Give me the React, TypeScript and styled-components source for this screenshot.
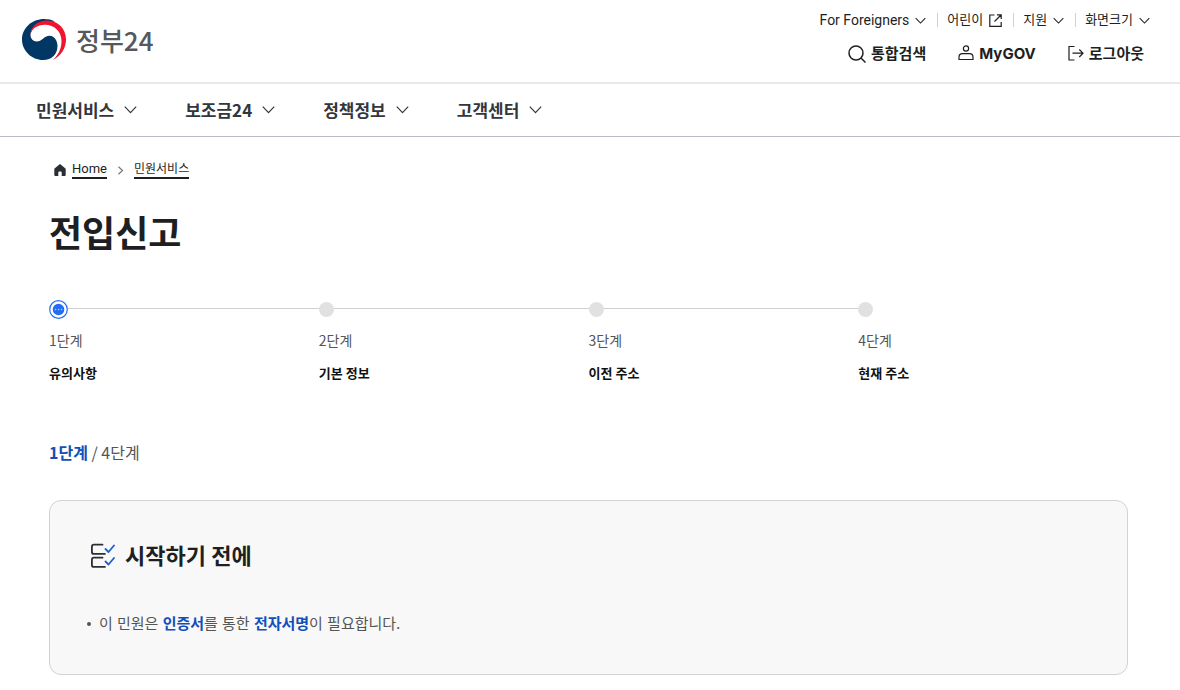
import React from "react";
import styled, { createGlobalStyle } from "styled-components";

const GlobalStyle = createGlobalStyle`
  *, *::before, *::after { box-sizing: border-box; }
  body {
    margin: 0;
    background: #fff;
    color: #1d1f22;
    font-family: Inter, "Noto Sans CJK KR", sans-serif;
    font-size: 14px;
  }
  h1, h2, p, ol, ul { margin: 0; padding: 0; }
  ol, ul { list-style: none; }
  svg { display: block; flex: none; }
`;

const Header = styled.header`
  display: flex;
  justify-content: space-between;
  align-items: flex-start;
  padding: 8px 30px 8px 22px;
  height: 84px;
  border-bottom: 2px solid #e6e8ea;
`;

const Brand = styled.a`
  display: flex;
  align-items: center;
  gap: 9px;
  height: 64px;
  color: #55585c;
  font-family: "Noto Sans CJK KR", sans-serif;
  font-size: 26px;
  font-weight: 500;
  line-height: 40px;
  text-decoration: none;
`;

const Tools = styled.div`
  display: flex;
  flex-direction: column;
  align-items: flex-end;
  gap: 8px;
`;

const UtilityList = styled.ul`
  display: flex;
  align-items: center;
`;

const UtilityItem = styled.li`
  display: flex;
  align-items: center;

  & + &::before {
    content: "";
    width: 1px;
    height: 14px;
    margin: 0 9px 0 11px;
    background: #cdd1d5;
  }
`;

const PlainButton = styled.button`
  display: flex;
  align-items: center;
  padding: 0;
  border: 0;
  background: none;
  color: inherit;
  font: inherit;
  cursor: pointer;
`;

const UtilityButton = styled(PlainButton)<{ $latin?: boolean }>`
  gap: 6px;
  font-family: Roboto, "Noto Sans CJK KR", sans-serif;
  font-size: ${(p) => (p.$latin ? 14 : 13)}px;
  line-height: 24px;
`;

const ActionList = styled.ul`
  display: flex;
  gap: 32px;
  padding-right: 6px;
`;

const ActionButton = styled(PlainButton)`
  gap: 5px;
  font-size: 15px;
  font-weight: 700;
  line-height: 28px;
`;

const MainNav = styled.nav`
  border-bottom: 1px solid #b8bdc4;
  padding: 0 36px 2px;
`;

const MenuList = styled.ul`
  display: flex;
  gap: 48px;
`;

const MenuButton = styled(PlainButton)`
  gap: 10px;
  height: 50px;
  color: #33363d;
  font-family: "Noto Sans CJK KR", sans-serif;
  font-size: 17px;
  font-weight: 700;
`;

const Main = styled.main`
  padding: 24px 52px 16px 49px;
`;

const Breadcrumb = styled.ol`
  display: flex;
  align-items: center;
  gap: 9px;
  padding-left: 5px;
`;

const Crumb = styled.li`
  display: flex;
  align-items: center;
  gap: 6px;
`;

const CrumbLink = styled.a<{ $latin?: boolean }>`
  border-bottom: 2px solid #1d1f22;
  color: inherit;
  font-family: Roboto, "Noto Sans CJK KR", sans-serif;
  font-size: ${(p) => (p.$latin ? 13 : 12)}px;
  line-height: 16px;
  text-decoration: none;
`;

const PageTitle = styled.h1`
  margin-top: 27px;
  font-size: 36px;
  font-weight: 700;
  line-height: 56px;
`;

const Steps = styled.ol`
  display: grid;
  grid-template-columns: repeat(4, 1fr);
  margin-top: 38px;
`;

const Step = styled.li`
  display: flex;
  flex-direction: column;
`;

const StepTrack = styled.div`
  display: flex;
  align-items: center;
  height: 19px;
`;

const StepDot = styled.span`
  width: 15px;
  height: 15px;
  border-radius: 50%;
  background: #e1e1e1;
`;

const StepLine = styled.span`
  flex: 1;
  height: 1px;
  margin-bottom: 2px;
  background: #d0d0d0;
`;

const StepNumber = styled.span`
  margin-top: 9px;
  color: #555;
  font-family: "Noto Sans CJK KR", sans-serif;
  font-size: 14px;
  line-height: 24px;
`;

const StepName = styled.strong`
  margin-top: 9px;
  color: #111;
  font-size: 13px;
  line-height: 24px;
`;

const Progress = styled.p`
  margin-top: 55px;
  color: #555;
  font-family: "Noto Sans CJK KR", sans-serif;
  font-size: 16px;
  line-height: 24px;
`;

const Accent = styled.strong`
  color: #124fb8;
`;

const Card = styled.section`
  margin-top: 36px;
  padding: 37px 40px 36px;
  border: 1px solid #d2d2d2;
  border-radius: 12px;
  background: #f8f8f8;
`;

const CardTitle = styled.h2`
  display: flex;
  align-items: center;
  gap: 10px;
  font-size: 22px;
  font-weight: 700;
  line-height: 36px;
`;

const NoteList = styled.ul`
  margin-top: 36px;
`;

const Note = styled.li`
  display: flex;
  align-items: center;
  gap: 8px;
  color: #555;
  font-size: 15px;
  line-height: 28px;

  &::before {
    content: "";
    width: 4px;
    height: 4px;
    margin-left: -3px;
    border-radius: 50%;
    background: #555;
  }
`;

const Chevron = ({ size }: { size: number }) => (
  <svg width={size} height={size} viewBox="0 0 13 13" fill="none" stroke="currentColor" strokeWidth="1.2" aria-hidden="true">
    <path d="M.8 3.6 6.5 9.6l5.7-6" />
  </svg>
);

const Emblem = () => (
  <svg width="45" height="44" viewBox="0 0 45 44" aria-hidden="true">
    <path fill="#003764" d="M33 3.500C30 1.800 26 1 22 1 10 1 0 10 0 21.500S10 42 21 42c9 0 14.500-6 14.500-14 0-6-3.500-10.300-8-10.300-5.500 0-7.500 5.800-13 5.800-3.500 0-6-3-6-6.500C8.500 10 15 4.500 24 4.500Z" />
    <path fill="#f0142f" d="M8.500 17C8.500 9 15 2.600 25 2.600c11 0 19 8.400 19 18.900 0 8.500-5 16.500-13 20.500 6-6 8.500-12 8.500-19 0-10-7.500-16-16.500-16.200C15 6.800 9.500 11 8.500 17Z" />
  </svg>
);

const ExternalIcon = () => (
  <svg width="13" height="13" viewBox="0 0 13 13" fill="none" stroke="currentColor" strokeWidth="1.2" aria-hidden="true">
    <path d="M5.500 1H.8v11.300h11.400V8M8 .8h4.200V5M12 1 5.500 7.500" />
  </svg>
);

const SearchIcon = () => (
  <svg width="18" height="18" viewBox="0 0 18 18" fill="none" stroke="currentColor" strokeWidth="1.500" aria-hidden="true">
    <circle cx="8" cy="8" r="7" />
    <path d="m13 13 4.500 4.500" />
  </svg>
);

const PersonIcon = () => (
  <svg width="16" height="18" viewBox="0 0 16 18" fill="none" stroke="currentColor" strokeWidth="1.200" aria-hidden="true">
    <circle cx="8" cy="3.500" r="2.600" />
    <path d="M1 14.500V12.200C1 10.200 2.500 8.700 4.500 8.700h7c2 0 3.500 1.500 3.500 3.500v2.300Z" />
  </svg>
);

const LogoutIcon = () => (
  <svg width="16" height="18" viewBox="0 0 16 18" fill="none" stroke="currentColor" strokeWidth="1.200" aria-hidden="true">
    <path d="M6.500 1.500H1V15h5.500M4.500 8.200H15M11.300 4.500 15 8.200l-3.700 3.800" />
  </svg>
);

const HomeIcon = () => (
  <svg width="12" height="12" viewBox="0 0 12 12" fill="#2b2e33" aria-hidden="true">
    <path d="M6 0 .8 4.300Q.3 4.800.3 5.500V11q0 1 1 1h3V8.500q0-1 1-1h1.400q1 0 1 1V12h3q1 0 1-1V5.500q0-.7-.5-1.200Z" />
  </svg>
);

const CrumbArrow = () => (
  <svg width="9" height="9" viewBox="0 0 9 9" fill="none" stroke="#6d7882" strokeWidth="1.200" aria-hidden="true">
    <path d="m2.500.8 4 3.700-4 3.700" />
  </svg>
);

const ActiveDot = () => (
  <svg width="19" height="19" viewBox="0 0 19 19" aria-hidden="true">
    <circle cx="9.500" cy="9.500" r="8.800" fill="#fff" stroke="#256ef4" strokeWidth="1.200" />
    <circle cx="9.500" cy="9.500" r="5.800" fill="#256ef4" />
    <g fill="#a9c6fb">
      <circle cx="6.500" cy="9.500" r=".8" />
      <circle cx="9.500" cy="9.500" r=".8" />
      <circle cx="12.500" cy="9.500" r=".8" />
    </g>
  </svg>
);

const ChecklistIcon = () => (
  <svg width="25" height="26" viewBox="0 0 25 26" fill="none" strokeWidth="1.800" strokeLinecap="round" strokeLinejoin="round" aria-hidden="true">
    <path stroke="#2b2e33" d="M12.500 1.700H3.900q-2 0-2 2v5.200q0 2 2 2h11M12.500 14.700H3.900q-2 0-2 2v5.200q0 2 2 2h11" />
    <path stroke="#1f5fd0" d="m15.500 6 3 3 5.500-6.500M15.500 18.500l3 3 5.500-6.500" />
  </svg>
);

const menus = ["민원서비스", "보조금24", "정책정보", "고객센터"];
const steps = ["유의사항", "기본 정보", "이전 주소", "현재 주소"];

export default function App() {
  return (
    <>
      <GlobalStyle />
      <Header>
        <Brand href="#"><Emblem />정부24</Brand>
        <Tools>
          <UtilityList>
            <UtilityItem><UtilityButton $latin>For Foreigners<Chevron size={11} /></UtilityButton></UtilityItem>
            <UtilityItem><UtilityButton>어린이<ExternalIcon /></UtilityButton></UtilityItem>
            <UtilityItem><UtilityButton>지원<Chevron size={11} /></UtilityButton></UtilityItem>
            <UtilityItem><UtilityButton>화면크기<Chevron size={11} /></UtilityButton></UtilityItem>
          </UtilityList>
          <ActionList>
            <li><ActionButton><SearchIcon />통합검색</ActionButton></li>
            <li><ActionButton><PersonIcon />MyGOV</ActionButton></li>
            <li><ActionButton><LogoutIcon />로그아웃</ActionButton></li>
          </ActionList>
        </Tools>
      </Header>
      <MainNav aria-label="주 메뉴">
        <MenuList>
          {menus.map((menu) => (
            <li key={menu}><MenuButton>{menu}<Chevron size={13} /></MenuButton></li>
          ))}
        </MenuList>
      </MainNav>
      <Main>
        <Breadcrumb>
          <Crumb><HomeIcon /><CrumbLink $latin href="#">Home</CrumbLink></Crumb>
          <Crumb aria-hidden="true"><CrumbArrow /></Crumb>
          <Crumb><CrumbLink href="#">민원서비스</CrumbLink></Crumb>
        </Breadcrumb>
        <PageTitle>전입신고</PageTitle>
        <Steps>
          {steps.map((name, i) => (
            <Step key={name} aria-current={i === 0 ? "step" : undefined}>
              <StepTrack>
                {i === 0 ? <ActiveDot /> : <StepDot />}
                {i < steps.length - 1 && <StepLine />}
              </StepTrack>
              <StepNumber>{i + 1}단계</StepNumber>
              <StepName>{name}</StepName>
            </Step>
          ))}
        </Steps>
        <Progress><Accent>1단계</Accent> / 4단계</Progress>
        <Card>
          <CardTitle><ChecklistIcon />시작하기 전에</CardTitle>
          <NoteList>
            <Note><span>이 민원은 <Accent>인증서</Accent>를 통한 <Accent>전자서명</Accent>이 필요합니다.</span></Note>
          </NoteList>
        </Card>
      </Main>
    </>
  );
}
